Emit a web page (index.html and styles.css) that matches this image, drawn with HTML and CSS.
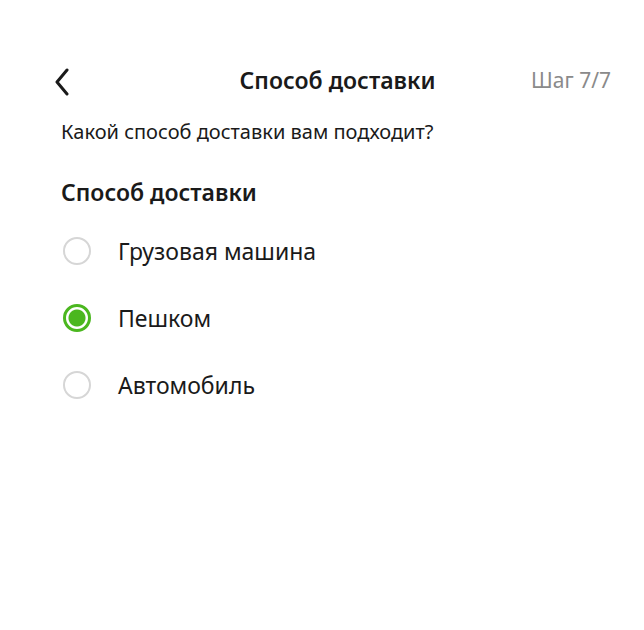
FILE: index.html
```html
<!DOCTYPE html>
<html lang="ru">
<head>
    <meta charset="UTF-8">
    <meta name="viewport" content="width=device-width, initial-scale=1.0">
    <title>Способ доставки</title>
    <link rel="stylesheet" href="styles.css">
</head>
<body>
    <div class="screen">
        <div class="topbar">
            <button class="back" aria-label="Назад">
                <svg width="16" height="28" viewBox="0 0 16 28">
                    <path d="M13 2 L3 14 L13 26" fill="none" stroke="#1a1a1a" stroke-width="3" stroke-linecap="round" stroke-linejoin="round"/>
                </svg>
            </button>
            <div class="title">Способ доставки</div>
            <div class="step">Шаг 7/7</div>
        </div>

        <p class="question">Какой способ доставки вам подходит?</p>

        <h2 class="group-title">Способ доставки</h2>

        <div class="options">
            <label class="option">
                <input type="radio" name="delivery">
                <span class="radio"></span>
                <span class="label">Грузовая машина</span>
            </label>
            <label class="option">
                <input type="radio" name="delivery" checked>
                <span class="radio"></span>
                <span class="label">Пешком</span>
            </label>
            <label class="option">
                <input type="radio" name="delivery">
                <span class="radio"></span>
                <span class="label">Автомобиль</span>
            </label>
        </div>
    </div>
</body>
</html>
```

FILE: styles.css
```css
body {
    margin: 0;
    background-color: #fff;
    font-family: 'Noto Sans', sans-serif;
    color: #1a1a1a;
}

.screen {
    padding: 63px 32px 0 61px;
}

.topbar {
    display: grid;
    grid-template-columns: 1fr auto 1fr;
    align-items: center;
    height: 34px;
}

.back {
    justify-self: start;
    background: none;
    border: none;
    padding: 0;
    margin-left: -7px;
    margin-top: 3px;
    display: flex;
    cursor: pointer;
}

.title {
    font-size: 23px;
    font-weight: 600;
    margin-left: 2px;
}

.step {
    justify-self: end;
    font-size: 21px;
    color: #8a8a8a;
    margin-right: 1px;
}

.question {
    margin: 21px 0 0;
    font-size: 20px;
}

.group-title {
    margin: 31px 0 0;
    font-size: 23px;
    font-weight: 600;
}

.options {
    display: flex;
    flex-direction: column;
    gap: 37px;
    margin-top: 28px;
}

.option {
    display: flex;
    align-items: center;
    height: 30px;
    cursor: pointer;
}

.option input {
    display: none;
}

.radio {
    width: 24px;
    height: 24px;
    border: 2px solid #d6d6d6;
    border-radius: 50%;
    box-sizing: content-box;
    margin-left: 2px;
    margin-right: 27px;
    flex-shrink: 0;
}

.option input:checked + .radio {
    border: 3px solid #4bb71f;
    width: 22px;
    height: 22px;
    background: radial-gradient(circle, #4bb71f 0 8px, #fff 9px);
}

.label {
    font-size: 23px;
}
```
